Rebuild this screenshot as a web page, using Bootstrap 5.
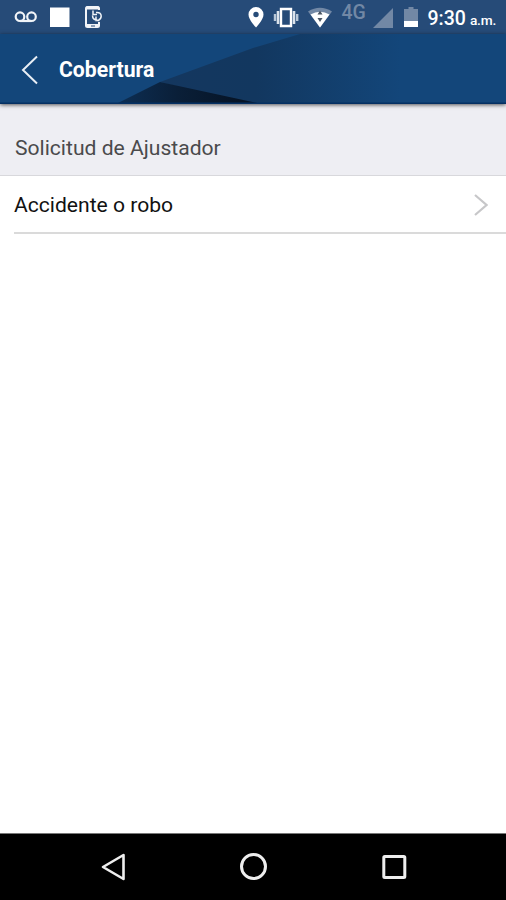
<!DOCTYPE html>
<html lang="es">
<head>
<meta charset="utf-8">
<meta name="viewport" content="width=device-width, initial-scale=1">
<title>Cobertura</title>
<link href="https://cdn.jsdelivr.net/npm/bootstrap@5.3.0/dist/css/bootstrap.min.css" rel="stylesheet">
<style>
body{font-family:Roboto,"Liberation Sans",sans-serif;color:#111;overflow:hidden}
svg{display:block;flex:none}
.screen{height:900px}
.status-bar{height:34px;background:#264b78;color:#fff;padding-left:14px;padding-right:10px}
.left-icons{gap:12px}
.phone-icon{margin-left:2px}
.gap-icon{margin-left:9px}
.battery{margin-left:11px}
.net-label{font-size:19.5px;line-height:26px;height:34px;width:24px;color:#7288a5;font-weight:500;margin-left:10px;margin-right:7px}
.clock{font-size:19.500px;line-height:38px;height:34px;font-weight:500;margin-left:9px;white-space:nowrap}
.clock small{font-size:13.7px;margin-left:4px;letter-spacing:-.2px}
.title-bar{height:70px;background:#13467a;display:grid;flex:none;box-shadow:0 1px 4px rgba(0,0,0,.65);z-index:1}
.title-bar>*{grid-area:1/1}
.title-text{font-size:21.2px;font-weight:700;line-height:72px;color:#fff;margin:0 0 0 20px}
.section-head{height:72px;background:#eeeef3;border-bottom:1px solid #d8d8dc;color:#4a4a4c;font-size:21.1px;padding:17px 14px 0 15px}
.row-item{height:58px;margin-left:14px;border-bottom:2px solid #dadada;font-size:21.1px;padding:2px 18px 0 0}
.nav-keys{height:67px;background:#000;border-top:1px solid #777;padding-left:100px}
.key-gap{margin-left:114px}
</style>
</head>
<body class="bg-white">
<div class="screen d-flex flex-column">
  <div class="status-bar d-flex justify-content-between flex-shrink-0">
    <div class="left-icons d-flex">
      <svg width="24" height="34" fill="none" stroke="#f1f4f8" stroke-width="2.2"><circle cx="6" cy="16.7" r="4.3"/><circle cx="17.5" cy="16.7" r="4.3"/><path d="M6 21h11.5"/></svg>
      <svg width="20" height="34"><path fill="#fff" d="M0 7.5h19.500V27H0z"/></svg>
      <svg class="phone-icon" width="20" height="34" fill="none" stroke="#f1f4f8"><path stroke-width="2" d="M15 10V8.500q0-1.500-1.500-1.500H3.500Q2 7 2 8.500v17Q2 27 3.500 27h10q1.500 0 1.500-1.500V22"/><path stroke-width="3" d="M2 25.500h13M2 8h13"/><path stroke="#264b78" d="M7 26h4"/><path stroke-width="1.500" d="M9 10.500v4h4M8.500 15.500q0 4.500 5 4.500M12 12.500q5-.5 5.200 3.500 0 3-2.700 4M12 16.500v4h3.500"/></svg>
    </div>
    <div class="d-flex">
      <svg width="16" height="34"><path fill="#fff" fill-rule="evenodd" d="M8 7a7.500 7.500 0 0 0-7.500 7.500C.5 20 8 27.500 8 27.500s7.500-7.500 7.500-13A7.500 7.500 0 0 0 8 7zm0 4.800a2.700 2.700 0 1 1 0 5.400 2.700 2.700 0 0 1 0-5.400z"/></svg>
      <svg class="gap-icon" width="26" height="34"><path fill="none" stroke="#fff" stroke-width="2.400" d="M8 9h10v17H8z"/><path stroke="#dbe3ec" stroke-width="2.600" d="M5 11v13M21 11v13"/><path stroke="#b9c8d8" stroke-width="2.400" d="M2 14v7M24.200 14v7"/></svg>
      <svg class="gap-icon" width="24" height="34"><path fill="#7288a5" d="M0 11.500q12-7.500 24 0L12 27.500z"/><path fill="#fff" d="M2.500 14.500Q12 9 21.500 14.500L12 27.500z"/><path fill="#4a5563" d="M9.500 14.500l2.500-4 2.500 4zM9.500 18l2.500 4 2.500-4z"/></svg>
      <span class="net-label">4G</span>
      <svg width="20" height="34"><path fill="#7288a5" d="M20 8v20H0z"/></svg>
      <svg class="battery" width="15" height="34"><path fill="#7288a5" d="M4.500 7h5v2H14v12H0V9h4.500z"/><path fill="#fff" d="M0 21h14v6H0z"/></svg>
      <span class="clock">9:30<small>a.m.</small></span>
    </div>
  </div>
  <header class="title-bar position-relative">
    <svg width="506" height="70">
      <defs>
        <linearGradient id="beam" gradientUnits="userSpaceOnUse" x1="160" y1="0" x2="400" y2="0"><stop offset="0" stop-color="#14375f"/><stop offset=".4" stop-color="#12375f"/><stop offset="1" stop-color="#13467a"/></linearGradient>
        <linearGradient id="wedge" gradientUnits="userSpaceOnUse" x1="115" y1="0" x2="240" y2="0"><stop offset="0" stop-color="#0d2f55"/><stop offset=".5" stop-color="#0a1f38"/><stop offset="1" stop-color="#061426"/></linearGradient>
      </defs>
      <path fill="url(#beam)" d="M160 48L253 14L300 0H506V70H245z"/>
      <path fill="url(#wedge)" d="M116 70L160 48L262 70z"/>
      <path fill="#053063" d="M0 68.500h506V70H0z"/>
    </svg>
    <div class="d-flex align-items-center">
      <svg width="39" height="70" fill="none" stroke="#e8eef5" stroke-width="2"><path d="M37 21.500L23 35l14 13.500"/></svg>
      <h1 class="title-text">Cobertura</h1>
    </div>
  </header>
  <div class="section-head d-flex align-items-center flex-shrink-0">Solicitud de Ajustador</div>
  <div class="row-item d-flex align-items-center justify-content-between flex-shrink-0">
    <span>Accidente o robo</span>
    <svg width="14" height="24" fill="none" stroke="#c7c7c9" stroke-width="2.200"><path d="M1 2l11.500 10L1 22"/></svg>
  </div>
  <div class="flex-grow-1"></div>
  <nav class="nav-keys d-flex flex-shrink-0" aria-label="Sistema">
    <svg width="26" height="66" fill="none" stroke="#eee" stroke-width="2.600"><path stroke-linejoin="round" d="M23.500 21v24L3 33z"/></svg>
    <svg class="key-gap" width="28" height="66" fill="none" stroke="#eee" stroke-width="3"><circle cx="13.500" cy="32.500" r="12"/></svg>
    <svg class="key-gap" width="26" height="66" fill="none" stroke="#eee" stroke-width="3"><rect x="1.800" y="22.500" width="21" height="21" rx="1"/></svg>
  </nav>
</div>
<script src="https://cdn.jsdelivr.net/npm/bootstrap@5.3.0/dist/js/bootstrap.bundle.min.js"></script>
</body>
</html>
